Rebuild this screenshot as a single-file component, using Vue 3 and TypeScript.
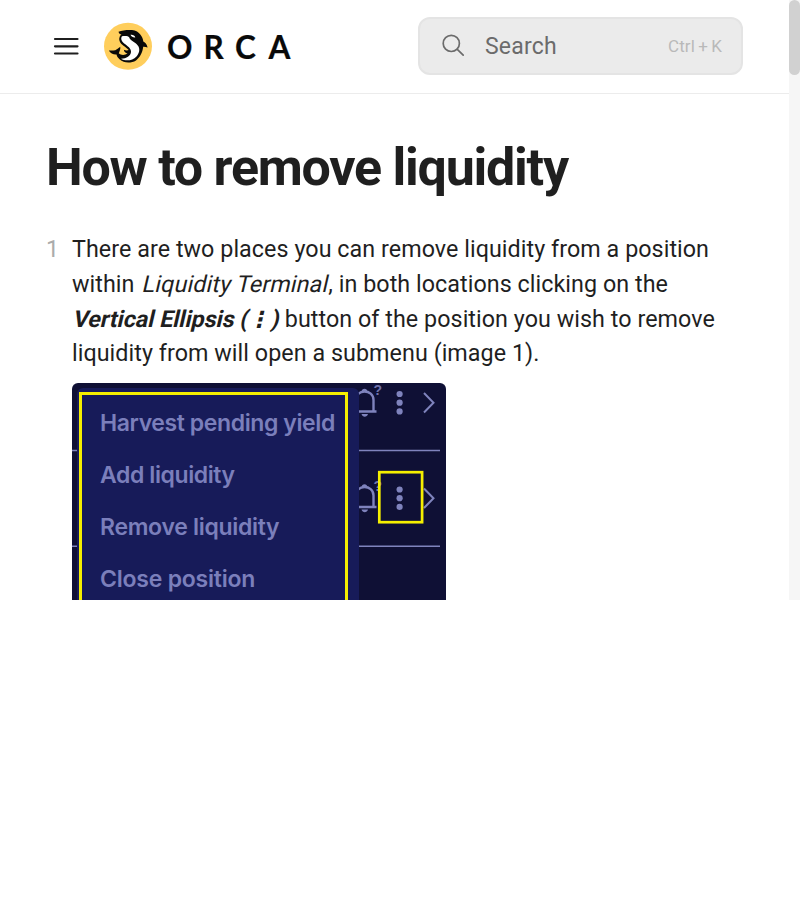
<script setup lang="ts">
interface MenuEntry {
  id: string
  label: string
}

const actions: MenuEntry[] = [
  { id: 'harvest', label: 'Harvest pending yield' },
  { id: 'add', label: 'Add liquidity' },
  { id: 'remove', label: 'Remove liquidity' },
  { id: 'close', label: 'Close position' },
]

const rowOffsets: number[] = [0, 95.5]
</script>

<template>
  <div class="viewport">
    <div class="page">
      <header class="topbar">
        <button class="menu-button" aria-label="Menu">
          <svg width="26" height="20" viewBox="0 0 26 20">
            <path d="M2 3H24.500M2 10.300H24.500M2 17.500H24.500" stroke="#1f1f1f" stroke-width="2.2" stroke-linecap="round" />
          </svg>
        </button>
        <a class="brand">
          <svg class="emblem" width="48" height="48" viewBox="0 0 48 48">
            <ellipse cx="24" cy="24.300" rx="24" ry="23.5" fill="#ffce5c" />
            <path d="M14.500 9.800C18 8.200 23 7.800 28 8C32 8.500 34.500 10 36.500 12.700C38 14.500 39 16.500 39.300 19.500C41.500 20.500 43 22.500 43.600 25.500C42 24.800 40.500 24.600 39.200 24.700C38.500 30 36.500 35 32 38.400C27 41.500 19.500 41 15.800 37.500C14 36 13 34.500 12.500 32.500C9.500 32.800 6.500 31.500 4.800 28.500C7.500 28.800 9.300 28.500 11.300 28.200C12.800 27.500 14.500 26 16.300 24.800C16.600 27.500 15.500 29.500 14.800 31.300C17 33.500 21 33.300 23.500 31.500C21.500 31 20.200 29.800 19.800 27.700C21.500 28.500 23.500 28.600 24.700 28C23.500 26.500 21.500 25.200 19.500 23.700C16.500 21.500 14.500 18.500 15.500 15.500C15.800 14 16.500 13.300 17.500 12.600C16 12.300 14.800 11.500 14.500 9.800Z" fill="#090909" />
            <path d="M18 14.200C20.500 14 24 13.500 25.300 15.500C26 18 29.500 19.500 32.500 22C36.500 25.500 36 30.500 32.500 34.500C28.500 38.800 21.500 39.500 17 36.700C22.500 36.800 26.500 34 27 30C27.300 26.500 23.500 24 20.500 21.800C17.200 18.800 16.500 16.500 18 14.200Z" fill="#fff" />
            <path d="M26.500 12.800C28.500 12.300 30.800 13.300 31.300 15.500C29.500 15.800 27.300 14.900 26.500 12.800Z" fill="#fff" />
          </svg>
          <svg class="wordmark" width="126" height="32" viewBox="0 0 126 32">
            <text x="0 36.500 68 101.500" y="28.500">ORCA</text>
          </svg>
        </a>
        <div class="search">
          <svg width="24" height="24" viewBox="0 0 24 24" fill="none" stroke="#6b6b6b" stroke-width="1.7" stroke-linecap="round">
            <circle cx="9.300" cy="9.400" r="8.100" />
            <path d="M15.300 15.300L21.200 21.100" />
          </svg>
          <span class="search-label">Search</span>
          <span class="shortcut">Ctrl + K</span>
        </div>
      </header>

      <main class="article">
        <h1>How to remove liquidity</h1>
        <div class="step">
          <span class="step-number">1</span>
          <div class="step-body">
            <p>
              <span class="line">There are two places you can remove liquidity from a position</span>
              <span class="line">within <em>Liquidity Terminal</em>, in both locations clicking on the</span>
              <span class="line"><strong>Vertical Ellipsis ( <i class="dots">⋮</i> )</strong> button of the position you wish to remove</span>
              <span class="line">liquidity from will open a submenu (image 1).</span>
            </p>
            <div class="figure">
              <svg class="backdrop" width="374" height="217" viewBox="0 0 374 217" fill="none" stroke="#7f83bd">
                <path d="M0 67.500H5M287 67.500H368M0 163.300H5M287 163.300H368" stroke-width="1.500" />
                <g v-for="offset in rowOffsets" :key="offset" :transform="`translate(0 ${offset})`">
                  <path d="M282 28.500H304.500M284 28V17C284 11.500 288 8.500 292.500 8.500S301.500 11.500 301.500 17V28" stroke-width="2.400" />
                  <path d="M289.500 9C289.500 4.500 295.500 4.500 295.500 9ZM289.500 31H296C295 34.500 290.500 34.500 289.500 31Z" fill="#7f83bd" stroke="none" />
                  <text x="301.500" y="12" class="hint">?</text>
                  <g fill="#7f83bd" stroke="none">
                    <circle cx="327.600" cy="11" r="3.100" />
                    <circle cx="327.600" cy="19.700" r="3.100" />
                    <circle cx="327.600" cy="28.400" r="3.100" />
                  </g>
                  <path d="M352 10L361.500 19.700L352 29.500" stroke-width="2" />
                </g>
                <rect x="307.300" y="89.200" width="42.800" height="50" stroke="#f5ef00" stroke-width="2.700" />
              </svg>
              <div class="popup">
                <ul>
                  <li v-for="action in actions" :key="action.id" :class="action.id">{{ action.label }}</li>
                </ul>
              </div>
            </div>
          </div>
        </div>
      </main>
    </div>
    <div class="scroll-track"><div class="scroll-thumb"></div></div>
  </div>
</template>

<style>
body {
  margin: 0;
  background: #fff;
}
</style>

<style scoped>
.viewport {
  display: flex;
  width: 800px;
  height: 600px;
  overflow: hidden;
  font-family: Roboto, sans-serif;
  color: #1f1f1f;
}
.page {
  width: 789px;
  flex: none;
}
.scroll-track {
  width: 11px;
  background: #f6f6f6;
}
.scroll-thumb {
  height: 75px;
  border-radius: 6px;
  background: #d1d1d1;
}
.topbar {
  box-sizing: border-box;
  height: 94px;
  padding: 0 46px 2px 53px;
  display: flex;
  align-items: center;
  border-bottom: 1px solid #ececec;
}
.menu-button {
  display: flex;
  padding: 0;
  border: 0;
  background: none;
}
.brand {
  display: flex;
  align-items: center;
  gap: 15px;
  margin-left: 25px;
}
.wordmark {
  overflow: visible;
}
.wordmark text {
  font: 700 31.5px Lato, sans-serif;
  fill: #090909;
  stroke: #090909;
  stroke-width: 0.2px;
}
.search {
  box-sizing: border-box;
  width: 325px;
  height: 58px;
  margin-left: auto;
  padding: 1px 19px 0 22px;
  display: flex;
  align-items: center;
  border: 2px solid #e4e4e4;
  border-radius: 12px;
  background: #ebebeb;
}
.search-label {
  margin-left: 19px;
  padding-top: 1px;
  font-size: 23px;
  letter-spacing: 0.2px;
  color: #6b6b6b;
}
.shortcut {
  margin-left: auto;
  font-size: 17px;
  letter-spacing: 0.15px;
  word-spacing: -1.2px;
  color: #b9b9b9;
}
.article {
  padding: 43px 0 0 46px;
}
h1 {
  margin: 0;
  font-size: 52px;
  line-height: 62px;
  font-weight: 700;
  letter-spacing: -1.25px;
  white-space: nowrap;
}
.step {
  display: flex;
  margin-top: 33.2px;
  font-size: 23.3px;
  line-height: 34.7px;
}
.step-number {
  width: 26px;
  flex: none;
  color: #ababab;
}
p {
  margin: 0;
}
.line {
  display: block;
  height: 34.7px;
  white-space: nowrap;
  letter-spacing: 0.05px;
}
em,
strong {
  display: inline-block;
  font-style: normal;
  transform: skewX(-13deg);
  transform-origin: 0 75%;
}
em {
  margin-left: 1px;
  letter-spacing: 0.15px;
  margin-right: 1.2px;
}
strong {
  letter-spacing: -0.04px;
  margin-right: 0.8px;
}
.dots {
  display: inline-flex;
  justify-content: center;
  width: 11.5px;
  font: 700 22px/22px "DejaVu Sans", sans-serif;
}
.figure {
  position: relative;
  width: 374px;
  height: 217px;
  margin-top: 11.8px;
  overflow: hidden;
  border-radius: 6px 6px 0 0;
  background: #0f1035;
}
.backdrop {
  display: block;
}
.hint {
  font: 700 14px "Liberation Sans", sans-serif;
  fill: #6f73ab;
  stroke: none;
}
.popup {
  position: absolute;
  top: 5px;
  left: 5px;
  width: 282px;
  height: 220px;
  box-sizing: border-box;
  padding: 4px 11px 0 2px;
  border-radius: 6px;
  background: #171b59;
}
ul {
  box-sizing: border-box;
  height: 230px;
  margin: 0;
  padding: 2px 0 0 18px;
  border: 3px solid #f5ef00;
  list-style: none;
}
li {
  font: 600 23px/52.2px Inter, Arial, sans-serif;
  letter-spacing: -0.4px;
  color: #7b7fbb;
  white-space: nowrap;
}
.remove {
  letter-spacing: -0.3px;
}
.close {
  letter-spacing: -0.22px;
}
</style>
